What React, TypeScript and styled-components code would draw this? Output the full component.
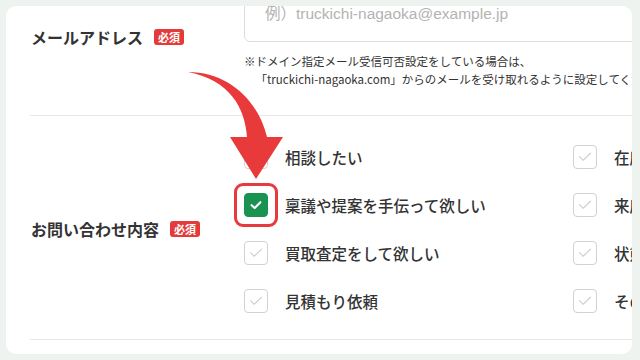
import React from 'react'
import styled, { createGlobalStyle, css } from 'styled-components'

const GlobalStyle = createGlobalStyle`
  html, body {
    margin: 0;
    padding: 0;
    background: #eef3f0;
  }
  * {
    box-sizing: border-box;
  }
`

const Page = styled.div`
  position: relative;
  width: 640px;
  height: 360px;
  padding: 6px 8px 6px 6px;
  font-family: 'Noto Sans CJK JP', 'Noto Sans', sans-serif;
  color: #333;
`

const Card = styled.div`
  width: 626px;
  height: 348px;
  background: #fff;
  border-radius: 10px;
  overflow: hidden;
  padding-left: 24px;
`

const Inner = styled.div`
  width: 820px;
  margin-top: -12px;
`

const Row = styled.div<{ $center?: boolean }>`
  display: grid;
  grid-template-columns: 214px 1fr;
  align-items: ${(p) => (p.$center ? 'center' : 'start')};
  border-bottom: 1px solid #e8e8e8;
`

const EmailRow = styled(Row)`
  padding-bottom: 27px;
`

const InquiryRow = styled(Row)`
  padding: 29px 0 26px;
`

const Label = styled.div<{ $top?: number }>`
  display: flex;
  align-items: center;
  gap: 11px;
  font-size: 16px;
  font-weight: 700;
  line-height: 24px;
  padding-top: ${(p) => p.$top ?? 0}px;
  margin-left: 1px;
`

const Required = styled.span`
  display: inline-flex;
  align-items: center;
  height: 16px;
  padding: 0 4px;
  border-radius: 3px;
  background: #e53a3a;
  color: #fff;
  font-size: 11px;
  font-weight: 700;
  line-height: 1;
`

const Field = styled.div`
  display: flex;
  flex-direction: column;
`

const TextInput = styled.input`
  width: 560px;
  height: 48px;
  padding: 0 20px 8px;
  border: 1px solid #dcdcdc;
  border-radius: 6px;
  background: #fff;
  font-family: 'Liberation Sans', 'Noto Sans CJK JP', sans-serif;
  font-size: 15.5px;
  color: #333;
  outline: none;

  &::placeholder {
    color: #b3b3b3;
  }
`

const Note = styled.p`
  margin: 10px 0 0;
  padding-left: 1em;
  text-indent: -1em;
  font-size: 11.5px;
  line-height: 18px;
  white-space: nowrap;
  color: #333;
`

const Choices = styled.div`
  display: grid;
  grid-template-columns: 329px 329px;
  row-gap: 24px;
`

const Choice = styled.label`
  display: flex;
  align-items: center;
  gap: 17px;
  height: 24px;
  font-size: 15.5px;
  font-weight: 500;
  white-space: nowrap;
  color: #333;

  input {
    display: none;
  }
`

const Box = styled.span<{ $checked?: boolean }>`
  position: relative;
  flex: none;
  display: flex;
  align-items: center;
  justify-content: center;
  width: 24px;
  height: 24px;
  border-radius: 4px;
  border: 1.5px solid #d2d2d2;
  background: #fff;

  ${(p) =>
    p.$checked &&
    css`
      border-color: #1a9352;
      background: #1a9352;

      &::after {
        content: '';
        position: absolute;
        inset: -11px;
        border: 3px solid #e63a3c;
        border-radius: 9px;
      }
    `}
`

const ArrowLayer = styled.svg`
  position: absolute;
  left: 0;
  top: 0;
  pointer-events: none;
`

const choices = [
  { text: '相談したい', checked: false },
  { text: '在庫を確認したい', checked: false },
  { text: '稟議や提案を手伝って欲しい', checked: true },
  { text: '来店予約をしたい', checked: false },
  { text: '買取査定をして欲しい', checked: false },
  { text: '状態を確認したい', checked: false },
  { text: '見積もり依頼', checked: false },
  { text: 'その他', checked: false },
]

const Check = ({ checked }: { checked: boolean }) =>
  checked ? (
    <svg width="16" height="16" viewBox="0 0 16 16">
      <path d="M3.6 8.2 L6.7 11 L12.4 5.2" fill="none" stroke="#fff" strokeWidth="2.1" strokeLinecap="round" strokeLinejoin="round" />
    </svg>
  ) : (
    <svg width="18" height="18" viewBox="0 0 18 18">
      <path d="M3.5 8.6 L7.2 12.2 L14.5 5.2" fill="none" stroke="#d2d2d2" strokeWidth="1.2" strokeLinecap="round" strokeLinejoin="round" />
    </svg>
  )

export default function App() {
  return (
    <>
      <GlobalStyle />
      <Page>
        <Card>
          <Inner>
            <EmailRow>
              <Label $top={31}>
                メールアドレス<Required>必須</Required>
              </Label>
              <Field>
                <TextInput type="email" placeholder="例）truckichi-nagaoka@example.jp" />
                <Note>
                  ※ドメイン指定メール受信可否設定をしている場合は、
                  <br />
                  「truckichi-nagaoka.com」からのメールを受け取れるように設定してください。
                </Note>
              </Field>
            </EmailRow>
            <InquiryRow $center>
              <Label>
                お問い合わせ内容<Required>必須</Required>
              </Label>
              <Choices>
                {choices.map((c) => (
                  <Choice key={c.text}>
                    <input type="checkbox" defaultChecked={c.checked} />
                    <Box $checked={c.checked}>
                      <Check checked={c.checked} />
                    </Box>
                    {c.text}
                  </Choice>
                ))}
              </Choices>
            </InquiryRow>
          </Inner>
        </Card>
        <ArrowLayer width="640" height="360" viewBox="0 0 640 360">
          <path
            d="M188 72 C228 72 258 100 267 137 L283 137 L256 179 L230 137 L247 137 C245 108 230 80 188 72 Z"
            fill="#e8393b"
          />
        </ArrowLayer>
      </Page>
    </>
  )
}
